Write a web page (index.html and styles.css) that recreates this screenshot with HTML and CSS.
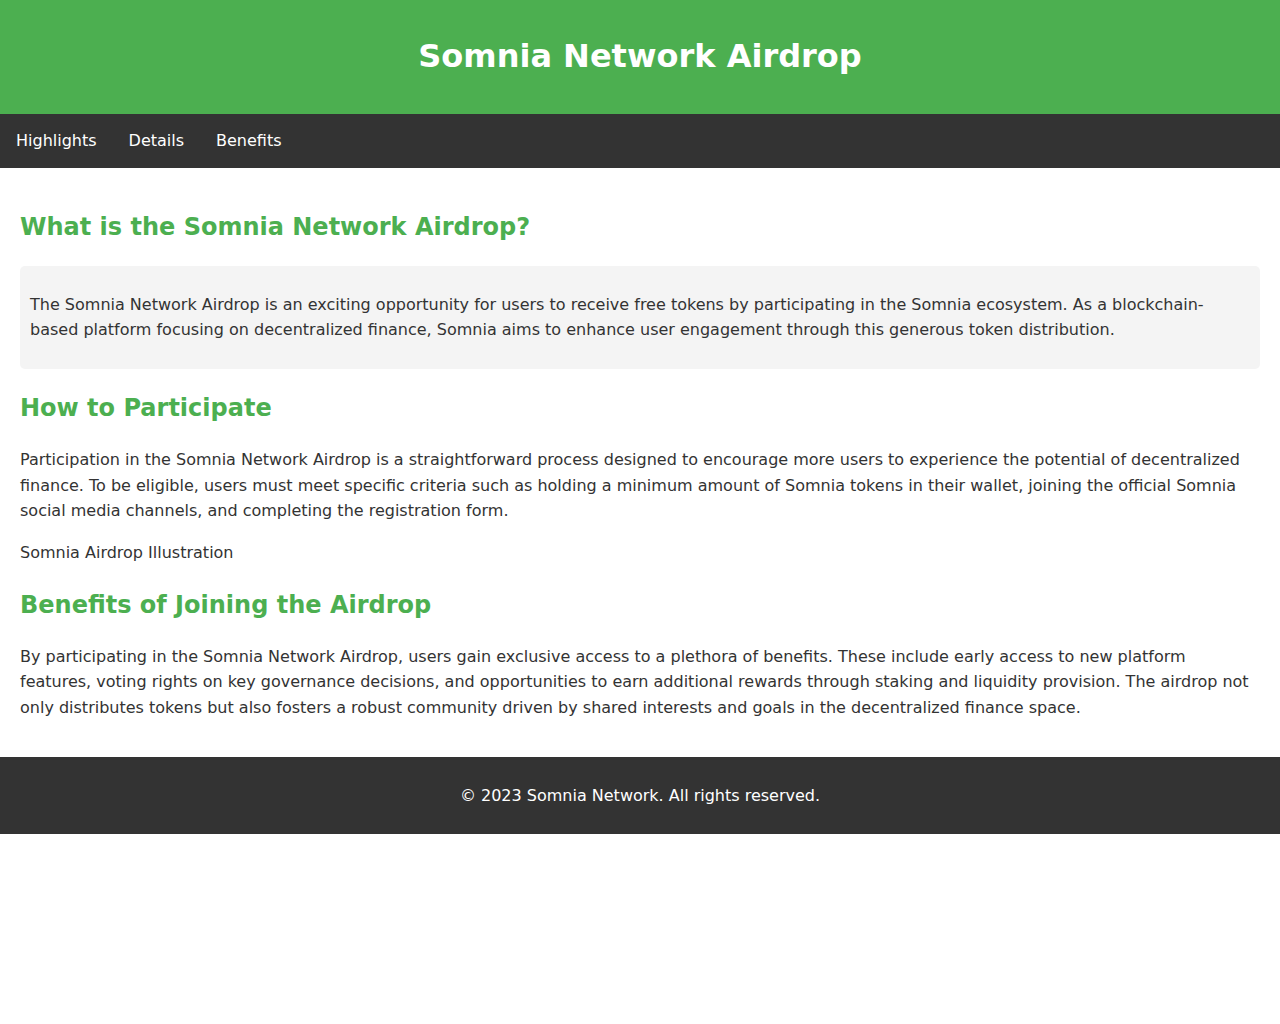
FILE: index.html
```html
<!DOCTYPE html>
<html lang="en">
<head>
<meta charset="utf-8">
<title>Somnia Network Airdrop</title>
<link rel="stylesheet" href="styles.css">
</head>
<body>
<header class="site-header">
  <h1 class="site-title">Somnia Network Airdrop</h1>
</header>
<nav class="site-nav">
  <a href="#highlights" class="nav-link">Highlights</a>
  <a href="#details" class="nav-link">Details</a>
  <a href="#benefits" class="nav-link">Benefits</a>
</nav>
<main class="content">
  <h2 class="section-title" id="highlights">What is the Somnia Network Airdrop?</h2>
  <section class="highlight-box">
    <p>The Somnia Network Airdrop is an exciting opportunity for users to receive free tokens by participating in the Somnia ecosystem. As a blockchain-based platform focusing on decentralized finance, Somnia aims to enhance user engagement through this generous token distribution.</p>
  </section>
  <h2 class="section-title" id="details">How to Participate</h2>
  <p>Participation in the Somnia Network Airdrop is a straightforward process designed to encourage more users to experience the potential of decentralized finance. To be eligible, users must meet specific criteria such as holding a minimum amount of Somnia tokens in their wallet, joining the official Somnia social media channels, and completing the registration form.</p>
  <p class="illustration">Somnia Airdrop Illustration</p>
  <h2 class="section-title" id="benefits">Benefits of Joining the Airdrop</h2>
  <p>By participating in the Somnia Network Airdrop, users gain exclusive access to a plethora of benefits. These include early access to new platform features, voting rights on key governance decisions, and opportunities to earn additional rewards through staking and liquidity provision. The airdrop not only distributes tokens but also fosters a robust community driven by shared interests and goals in the decentralized finance space.</p>
</main>
<footer class="site-footer">
  <p>&copy; 2023 Somnia Network. All rights reserved.</p>
</footer>
</body>
</html>
```

FILE: styles.css
```css
body {
  margin: 0;
  font-family: "DejaVu Sans", sans-serif;
  font-size: 16px;
  line-height: 1.6;
  color: #333;
  background: #fff;
}

.site-header {
  background: #4caf50;
  color: #fff;
  text-align: center;
  padding: 10px 0;
}

.site-title {
  font-size: 32px;
  margin: 21.44px 0;
}

.site-nav {
  background: #333;
  display: flex;
}

.nav-link {
  color: #fff;
  text-decoration: none;
  padding: 14px 16px;
}

.content {
  padding: 20px;
}

.section-title {
  color: #4caf50;
  font-size: 24px;
  margin: 19.92px 0;
}

.highlight-box {
  background: #f4f4f4;
  padding: 10px;
  border-radius: 5px;
}

.illustration {
  margin: 16px 0;
}

.site-footer {
  background: #333;
  color: #fff;
  text-align: center;
  padding: 10px 0;
}
```
